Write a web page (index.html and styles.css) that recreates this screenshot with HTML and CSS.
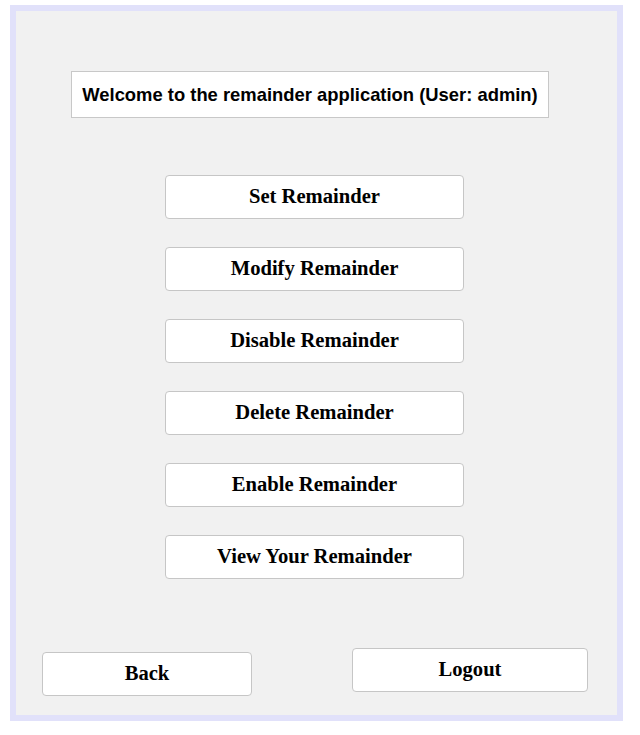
FILE: index.html
```html
<!DOCTYPE html>
<html>
<head>
<meta charset="utf-8">
<link rel="stylesheet" href="styles.css">
</head>
<body>
<div class="frame">
  <div class="welcome">Welcome to the remainder application (User: admin)</div>
  <div class="menu">
    <button class="btn menu-btn">Set Remainder</button>
    <button class="btn menu-btn">Modify Remainder</button>
    <button class="btn menu-btn">Disable Remainder</button>
    <button class="btn menu-btn">Delete Remainder</button>
    <button class="btn menu-btn">Enable Remainder</button>
    <button class="btn menu-btn">View Your Remainder</button>
  </div>
  <div class="footer">
    <button class="btn back">Back</button>
    <button class="btn logout">Logout</button>
  </div>
</div>
</body>
</html>
```
FILE: styles.css
```css
html, body {
  margin: 0;
  background: #ffffff;
}
body {
  padding: 5px 0 0 10px;
}
.frame {
  box-sizing: border-box;
  width: 613px;
  height: 716px;
  border: 6px solid #e1e1fa;
  background: #f1f1f1;
  padding-top: 60px;
}
.welcome {
  box-sizing: border-box;
  margin-left: 55px;
  width: 478px;
  height: 47px;
  border: 1px solid #c8c8c8;
  background: #ffffff;
  display: flex;
  align-items: center;
  justify-content: center;
  font-family: "Liberation Sans", Arial, sans-serif;
  font-weight: bold;
  font-size: 18.4px;
  color: #000;
}
.menu {
  margin-top: 57px;
  margin-left: 149px;
  display: flex;
  flex-direction: column;
  gap: 28px;
}
.btn {
  box-sizing: border-box;
  height: 44px;
  background: #ffffff;
  border: 1.5px solid #c6c6c6;
  border-radius: 4px;
  font-family: "Liberation Serif", "Times New Roman", serif;
  font-weight: bold;
  font-size: 20.6px;
  color: #000;
  padding: 0 0 2px 0;
  margin: 0;
}
.menu-btn {
  width: 299px;
}
.footer {
  margin-top: 73px;
  padding-left: 26px;
  display: flex;
  align-items: flex-start;
  gap: 100px;
}
.back {
  width: 210px;
  height: 44px;
}
.logout {
  width: 236px;
  margin-top: -4px;
}
```
